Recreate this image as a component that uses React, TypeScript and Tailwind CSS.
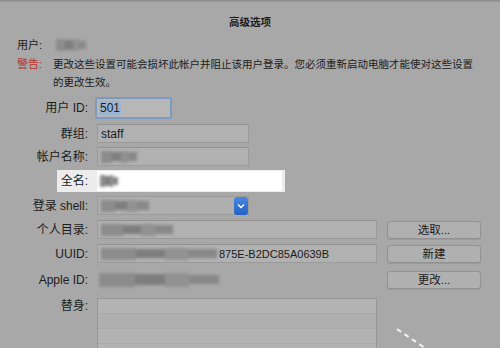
import React from 'react';

const font = { fontFamily: '"Liberation Sans", "Noto Sans CJK SC", sans-serif' };

function Blur({ w, className = '' }: { w: number; className?: string }) {
  // stand-in for the pixelated / blurred private values
  return (
    <div className={`flex h-[12px] items-center blur-[1.5px] ${className}`} style={{ width: w }}>
      <div className="h-full w-[30%] bg-[#8c8c8c]" />
      <div className="h-[80%] w-[25%] bg-[#7e7e7e]" />
      <div className="h-full w-[20%] bg-[#929292]" />
      <div className="h-[70%] w-[25%] bg-[#888888]" />
    </div>
  );
}

function Label({ children }: { children: React.ReactNode }) {
  return <div className="w-[89px] shrink-0 pr-[1px] text-right text-[12px]">{children}</div>;
}

function Field({ w, children, className = '' }: { w: number; children?: React.ReactNode; className?: string }) {
  return (
    <div
      className={`flex h-[19px] items-center border border-[#9b9b9b] border-t-[#929292] bg-[#b1b1b1] px-[3px] ${className}`}
      style={{ width: w }}
    >
      {children}
    </div>
  );
}

function Btn({ children }: { children: React.ReactNode }) {
  return (
    <div className="ml-[10px] flex h-[18px] w-[94px] items-center justify-center rounded-[3px] border border-[#929292] bg-[#b0b0b0] text-[11.5px] shadow-[0_1px_0_#9a9a9a]">
      {children}
    </div>
  );
}

export default function App() {
  return (
    <div
      className="relative h-[348px] w-[500px] overflow-hidden bg-[#a8a8a8] text-[10.5px] leading-[14px] text-[#1c1c1c]"
      style={font}
    >
      <div className="h-[2px] bg-gradient-to-b from-[#8a8a8a] to-[#9e9e9e]" />
      <div className="pt-[13px] text-center text-[10.5px] font-bold leading-[14px]">高级选项</div>

      <div className="mt-[8px] flex h-[16px] items-center pl-[17px] text-[11px]">
        <span>用户:</span>
        <Blur w={30} className="ml-[14px]" />
      </div>

      <div className="mt-[2px] flex pl-[17px] leading-[18px]">
        <span className="w-[36px] shrink-0 text-[11px] text-[#b3362c]">警告:</span>
        <p>
          更改这些设置可能会损坏此帐户并阻止该用户登录。您必须重新启动电脑才能使对这些设置
          <br />
          的更改生效。
        </p>
      </div>

      <div className="mt-[7px] flex h-[20px] items-center">
        <Label>用户 ID:</Label>
        <div className="ml-[6px] flex h-[22px] w-[77px] items-center rounded-[2px] border-[2px] border-[#7b9bc3] bg-[#b7b7b7] px-[2px]">
          <span className="bg-[#9cb4d4] px-[1px] text-[12px]">501</span>
        </div>
      </div>

      <div className="mt-[6px] flex items-center">
        <Label>群组:</Label>
        <Field w={152} className="ml-[8px]">
          <span className="text-[12px]">staff</span>
        </Field>
      </div>

      <div className="mt-[4px] flex items-center">
        <Label>帐户名称:</Label>
        <Field w={152} className="ml-[8px]">
          <Blur w={36} />
        </Field>
      </div>

      <div className="ml-[57px] mt-[4px] flex h-[22px] w-[228px] items-center bg-[#ececec]">
        <div className="w-[32px] pr-[1px] text-right text-[12px]">全名:</div>
        <div className="ml-[8px] flex h-[20px] w-[185px] items-center bg-white px-[3px]">
          <Blur w={18} />
        </div>
      </div>

      <div className="mt-[4px] flex items-center">
        <Label>登录 shell:</Label>
        <div className="ml-[8px] flex h-[19px] w-[152px] items-center border border-[#9b9b9b] bg-[#afafaf]">
          <div className="flex-1 px-[3px]">
            <Blur w={48} />
          </div>
          <div className="flex h-[18px] w-[14px] items-center justify-center rounded-[3px] bg-gradient-to-b from-[#4a88e0] to-[#2360c4]">
            <svg width="8" height="6" viewBox="0 0 8 6" fill="none">
              <path d="M1 1.5 L4 4.5 L7 1.5" stroke="white" strokeWidth="1.4" />
            </svg>
          </div>
        </div>
      </div>

      <div className="mt-[5px] flex items-center">
        <Label>个人目录:</Label>
        <Field w={280} className="ml-[8px]">
          <Blur w={72} />
        </Field>
        <Btn>选取...</Btn>
      </div>

      <div className="mt-[5px] flex items-center">
        <Label>UUID:</Label>
        <Field w={280} className="ml-[8px]">
          <Blur w={116} />
          <span className="ml-[2px] text-[11px]">875E-B2DC85A0639B</span>
        </Field>
        <Btn>新建</Btn>
      </div>

      <div className="mt-[7px] flex h-[19px] items-center">
        <Label>Apple ID:</Label>
        <div className="ml-[8px] w-[280px] px-[2px]">
          <Blur w={120} className="h-[14px]" />
        </div>
        <Btn>更改...</Btn>
      </div>

      <div className="mt-[9px] flex items-start">
        <Label>
          <div className="pt-[1px]">替身:</div>
        </Label>
        <div className="ml-[8px] h-[80px] w-[280px] border border-[#969696] bg-[#b3b3b3]">
          <div className="h-[15px] border-b border-[#a9a9a9]" />
          <div className="h-[15px] bg-[#afafaf] border-b border-[#a9a9a9]" />
          <div className="h-[15px] border-b border-[#a9a9a9]" />
        </div>
      </div>

      <svg className="absolute left-[395px] top-[326px]" width="40" height="24" viewBox="0 0 40 24">
        <path d="M2 3 L30 22" stroke="white" strokeWidth="2" strokeDasharray="5 4" opacity="0.85" />
      </svg>
    </div>
  );
}
